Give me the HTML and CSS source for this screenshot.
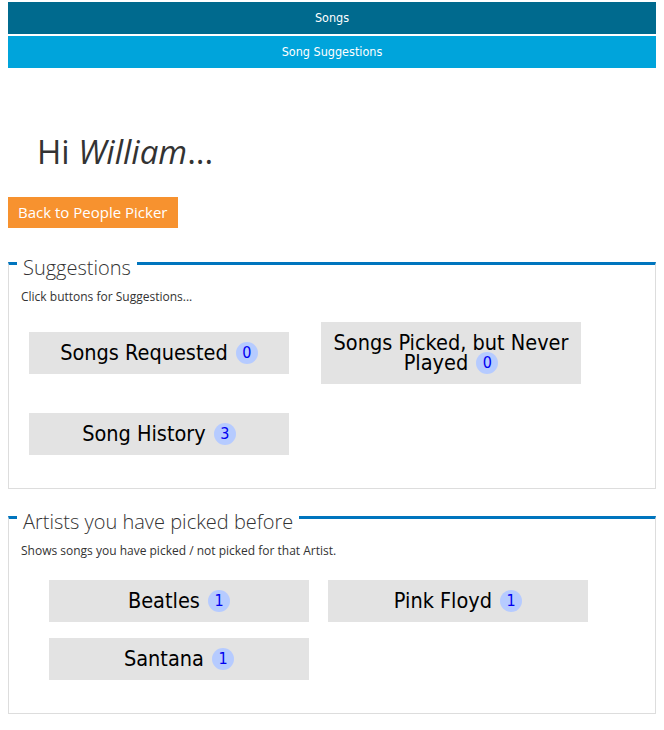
FILE: index.html
```html
<!DOCTYPE html>
<html>
<head>
<meta charset="utf-8">
<link rel="stylesheet" href="styles.css">
</head>
<body>
<nav class="nav">
  <a class="nav-item nav-dark" href="#">Songs</a>
  <a class="nav-item nav-light" href="#">Song Suggestions</a>
</nav>
<h1 class="greeting">Hi <em>William</em>...</h1>
<a class="back-btn" href="#">Back to People Picker</a>
<fieldset class="panel">
  <legend class="panel-title">Suggestions</legend>
  <p class="panel-note">Click buttons for Suggestions...</p>
  <div class="btn-grid btn-grid-a">
    <button class="pick">Songs Requested <span class="badge">0</span></button>
    <button class="pick">Songs Picked, but Never Played <span class="badge">0</span></button>
    <button class="pick">Song History <span class="badge">3</span></button>
  </div>
</fieldset>
<fieldset class="panel panel-b">
  <legend class="panel-title">Artists you have picked before</legend>
  <p class="panel-note">Shows songs you have picked / not picked for that Artist.</p>
  <div class="btn-grid btn-grid-b">
    <button class="pick">Beatles <span class="badge">1</span></button>
    <button class="pick">Pink Floyd <span class="badge">1</span></button>
    <button class="pick">Santana <span class="badge">1</span></button>
  </div>
</fieldset>
</body>
</html>
```
FILE: styles.css
```css
html, body { background: #fff; }
body {
  margin: 2px 8px 8px 8px;
  font-family: "Open Sans", sans-serif;
  color: #333;
}
.nav { display: flex; flex-direction: column; gap: 2px; }
.nav-item {
  display: block;
  height: 32px;
  line-height: 32px;
  text-align: center;
  color: #fff;
  text-decoration: none;
  font-family: "DejaVu Sans Condensed", "DejaVu Sans", sans-serif;
  font-size: 12.5px;
}
.nav-dark { background: #006a8e; }
.nav-light { background: #00a4db; }
.greeting {
  margin: 62px 0 0 29px;
  font-weight: 400;
  font-size: 33px;
  line-height: 44px;
  color: #333;
}
.greeting em { font-style: italic; }
.back-btn {
  display: inline-block;
  margin-top: 23px;
  background: #f7922f;
  color: #fff;
  text-decoration: none;
  font-size: 15px;
  height: 31px;
  line-height: 31px;
  padding: 0 10px;
  width: 150px;
  white-space: nowrap;
}
.panel {
  margin: 18px 0 0 0;
  padding: 0 12px 33px 12px;
  border: 1px solid #ddd;
  border-top: 3px solid #0075be;
  min-width: 0;
}
.panel-b { margin-top: 11px; }
.panel-title {
  margin-left: -4px;
  padding: 10px 6px 0 6px;
  font-weight: 300;
  font-size: 20px;
  line-height: 24px;
  color: #333;
}
.panel-note {
  margin: 8px 0 0 0;
  font-size: 12px;
  line-height: 18px;
  color: #333;
}
.btn-grid {
  display: flex;
  flex-wrap: wrap;
  align-items: center;
}
.btn-grid-a {
  margin: 16px 0 0 8px;
  column-gap: 32px;
  row-gap: 29px;
}
.btn-grid-b {
  margin: 20px 0 0 28px;
  column-gap: 19px;
  row-gap: 16px;
}
.pick {
  width: 260px;
  min-height: 42px;
  border: none;
  background: #e3e3e3;
  color: #000;
  font-family: "DejaVu Sans Condensed", "DejaVu Sans", sans-serif;
  font-size: 21.5px;
  line-height: 20px;
  padding: 11px 6px;
  text-align: center;
}
.badge {
  display: inline-block;
  width: 22px;
  height: 22px;
  line-height: 22px;
  border-radius: 50%;
  background: #b6cbff;
  color: #0000f0;
  font-size: 16px;
  text-align: center;
  margin: -4px 0 -4px 2px;
  vertical-align: 2px;
}
```
